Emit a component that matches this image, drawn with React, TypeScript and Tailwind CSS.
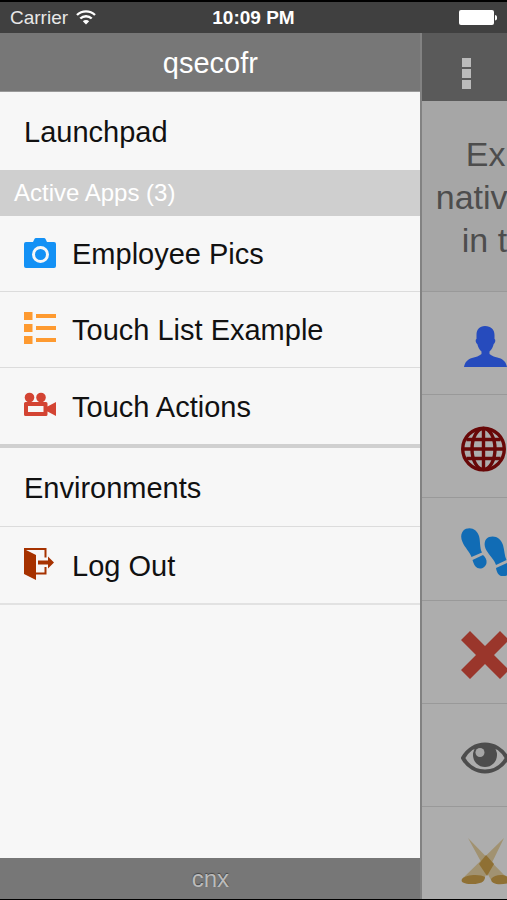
import React from 'react';

interface MenuItemProps {
  label: string;
  icon?: React.ReactNode;
  className?: string;
}

const CameraIcon = () => (
  <svg className="mb-1 h-8 w-8" viewBox="0 0 32 32" fill="#1491f5">
    <path d="M2 6h7l1.600-3.200a1.500 1.500 0 0 1 1.400-.8h8a1.500 1.500 0 0 1 1.400.8L23 6h7a2 2 0 0 1 2 2v22a2 2 0 0 1-2 2H2a2 2 0 0 1-2-2V8a2 2 0 0 1 2-2z" />
    <circle cx="16.500" cy="18.500" r="7" fill="none" stroke="#f7f7f7" strokeWidth="3" />
  </svg>
);

const ListIcon = () => (
  <svg className="mb-1 h-8 w-8" viewBox="0 0 32 32" fill="#fe9a30">
    <path d="M0 0h8.500v8H0zM0 12h8.500v8H0zM0 24h8.500v8H0zM12 2h20v4H12zM12 14h20v4H12zM12 26h20v4H12z" />
  </svg>
);

const MovieIcon = () => (
  <svg className="mb-1 h-8 w-8" viewBox="0 0 32 32" fill="#d34433">
    <circle cx="5.500" cy="8.500" r="4.800" />
    <circle cx="17" cy="8.500" r="4.800" />
    <path fillRule="evenodd" d="M1.500 13h20.500a1.500 1.500 0 0 1 1.500 1.500v3L32 13v14l-8.500-4.500v3a1.500 1.500 0 0 1-1.500 1.500H1.500A1.500 1.500 0 0 1 0 25.500v-11A1.500 1.500 0 0 1 1.500 13zM4 17v6h15.500v-6z" />
  </svg>
);

const LogOutIcon = () => (
  <svg className="mb-1 h-8 w-8" viewBox="0 0 32 32" fill="#a63200">
    <path d="M0 1l12 6v25L0 26z" />
    <path d="M0 0h22.500v9.500h-2V2H2v1L0 2zM20.500 19h2v7.500H11v-2h9.500zM14 12.500h10V8.500l6 6-6 6v-4H14z" />
  </svg>
);

const PersonIcon = () => (
  <svg className="h-12 w-12" viewBox="0 0 48 48" fill="#264bbd">
    <path d="M24 4c6 0 9.500 3.500 9.500 9v4c1.300.3 1 4-.8 5-.8 3-2 5.500-4.200 7.500v2.500c2 2 6 3 9.500 4 4.500 1.500 7 4 8 9H3c1-5 3.500-7.500 8-9 3.500-1 7.500-2 9.500-4v-2.500c-2.200-2-3.400-4.500-4.200-7.500-1.800-1-2.100-4.700-.8-5v-4c0-5.500 3-9 8.500-9z" />
  </svg>
);

const GlobeIcon = () => (
  <svg className="h-12 w-12" viewBox="0 0 48 48" fill="none" stroke="#680808" strokeWidth="3.400">
    <circle cx="22.500" cy="24" r="20.800" />
    <ellipse cx="22.500" cy="24" rx="11.500" ry="20.500" />
    <path d="M22.500 3v42M2 24h41M5.500 14.500h34M5.500 33.500h34" />
  </svg>
);

const StepsIcon = () => (
  <svg className="h-12 w-12" viewBox="0 0 48 48" fill="#116cb5">
    <path d="M5 .8C11-1.200 16 2 18 8c1.500 5 .5 12 3 16.500L10.500 29C9 24 4 20 1.500 14-1 9 0 3 5 .8z" />
    <path d="M11.500 32l10.500-5c2.500 2 4 5 3.500 8-.8 4.500-5.500 6.500-9 5-2.500-1-4-4.500-5-8z" />
    <path d="M28 9c6-2 12 1 14 8 1.500 5 1.500 11 3.500 15L35 37c-1.500-5-6.500-9.500-9.500-14.500C22.500 17.500 23 11 28 9z" />
    <path d="M35 40l11-5c2 2 3.500 5 3 8-.8 4.500-5.500 6-9 5-3-1-4.500-4.500-5-8z" />
  </svg>
);

const CrossIcon = () => (
  <svg className="h-12 w-12" viewBox="0 0 48 48" fill="#9a362b">
    <path d="M9 0l15 15L39 0l9 9-15 15 15 15-9 9-15-15L9 48l-9-9 15-15L0 9z" />
  </svg>
);

const EyeIcon = () => (
  <svg className="h-12 w-12" viewBox="0 0 48 48">
    <path d="M2 24C12 6 36 6 46 24 36 42 12 42 2 24z" fill="none" stroke="#4d4d4d" strokeWidth="4" />
    <circle cx="24" cy="21" r="12" fill="#4d4d4d" />
    <circle cx="19" cy="18.500" r="4.500" fill="#a5a5a5" />
  </svg>
);

const SpotlightIcon = () => (
  <svg className="h-12 w-12" viewBox="0 0 48 48">
    <path d="M7 1l39 40c-4-2-14-1-16 2z" fill="#99804a" fillOpacity="0.600" />
    <path d="M43 1L23 42C18 38 6 38 1 42z" fill="#99804a" fillOpacity="0.600" />
    <path d="M25 18l8 9-7 12-8-12z" fill="#8f7034" />
    <path d="M1 42c4-5 19-5 23-2 0 5-5 7-12 7S-1 46 1 42zM30 42c4-5 14-5 18-1v5c-8 2-18 2-18-4z" fill="#8f7034" />
  </svg>
);

const pageIcons = [PersonIcon, GlobeIcon, StepsIcon, CrossIcon, EyeIcon, SpotlightIcon];

const MenuItem: React.FC<MenuItemProps> = ({ label, icon, className = 'h-[76px]' }) => (
  <button type="button" className={`flex shrink-0 items-center gap-4 px-6 pt-px text-left text-[29px] leading-8 text-[#111] ${className}`}>
    {icon}
    <span>{label}</span>
  </button>
);

const StatusBar = () => (
  <div className="grid h-[33px] shrink-0 grid-cols-3 items-center border-t-2 border-black bg-[#404040] px-2.5 text-[19px] leading-6 text-white">
    <div className="flex items-center gap-2 text-[#e8e8e8]">
      <span>Carrier</span>
      <svg className="h-4 w-5" viewBox="0 0 20 16" fill="none" stroke="#fff" strokeWidth="2.400">
        <path d="M1 5a13 13 0 0 1 18 0M4.300 8.500a8.200 8.200 0 0 1 11.400 0" />
        <path d="M6.800 11.300a4.600 4.600 0 0 1 6.400 0L10 14.500z" fill="#fff" stroke="none" />
      </svg>
    </div>
    <span className="text-center font-bold">10:09 PM</span>
    <svg className="h-4 w-10 justify-self-end" viewBox="0 0 40 16" fill="#fff">
      <rect x="2" y="0" width="35" height="15" rx="2" />
      <path d="M38 5c3 .5 3 5 0 5.500z" />
    </svg>
  </div>
);

const Drawer = () => (
  <nav className="flex w-[83%] shrink-0 flex-col bg-[#f7f7f7]">
    <h1 className="flex h-[59px] shrink-0 items-center justify-center border-b border-[#999] bg-[#777] pt-0.5 text-[29px] leading-8 text-white">qsecofr</h1>
    <MenuItem label="Launchpad" className="h-[78px]" />
    <h2 className="flex h-[46px] shrink-0 items-center bg-[#cfcfcf] px-3.5 text-2xl text-white">Active Apps (3)</h2>
    <MenuItem label="Employee Pics" icon={<CameraIcon />} className="h-[76px] border-b border-[#dcdcdc]" />
    <MenuItem label="Touch List Example" icon={<ListIcon />} className="h-[76px] border-b border-[#dcdcdc]" />
    <MenuItem label="Touch Actions" icon={<MovieIcon />} className="h-[80px] border-b-4 border-[#d0d0d0]" />
    <MenuItem label="Environments" className="h-[79px] border-b border-[#dcdcdc]" />
    <MenuItem label="Log Out" icon={<LogOutIcon />} className="h-[78px] border-b-2 border-[#e2e2e2]" />
    <footer className="mt-auto flex h-[41px] shrink-0 items-center justify-center bg-[#777] text-2xl text-[#bbb] [text-shadow:0_-1px_1px_#444]">cnx</footer>
  </nav>
);

const Page = () => (
  <main className="-ml-px min-w-0 flex-1 overflow-hidden border-l-2 border-[#828282] bg-[#adadad]">
    <header className="flex h-[68px] items-center bg-[#5a5a5a] px-10 pt-3">
      <button type="button" aria-label="More" className="flex flex-col gap-[2px]">
        <span className="h-[9px] w-[9px] bg-[#bbb]" />
        <span className="h-[9px] w-[9px] bg-[#bbb]" />
        <span className="h-[9px] w-[9px] bg-[#bbb]" />
      </button>
    </header>
    <p className="h-[191px] whitespace-nowrap border-b border-[#999] bg-[#a6a6a6] pt-8 text-[34px] leading-[43px] text-[#4d4d4d]">
      <span className="block pl-11">Ex</span>
      <span className="block pl-3.5">nativ</span>
      <span className="block pl-10">in t</span>
    </p>
    <ul>
      {pageIcons.map((Icon, i) => (
        <li key={i} className="flex h-[103px] items-center border-b border-[#999] pl-[39px] pt-1.5 [&>svg]:shrink-0">
          <Icon />
        </li>
      ))}
    </ul>
  </main>
);

export default function App() {
  return (
    <div className="flex h-screen flex-col overflow-hidden border-b border-black font-['Liberation_Sans',Arial,sans-serif]">
      <StatusBar />
      <div className="flex min-h-0 flex-1">
        <Drawer />
        <Page />
      </div>
    </div>
  );
}
